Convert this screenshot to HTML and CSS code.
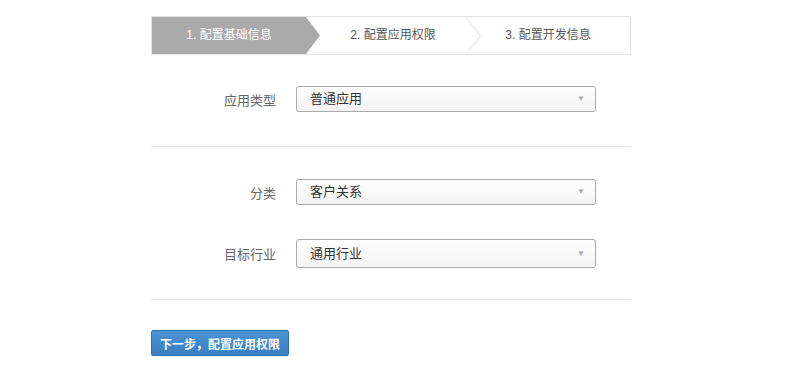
FILE: index.html
```html
<!DOCTYPE html>
<html lang="zh-CN">
<head>
  <meta charset="UTF-8">
  <title>配置基础信息</title>
  <link rel="stylesheet" href="styles.css">
</head>
<body>
  <div class="page">
    <!-- Wizard steps -->
    <div class="steps">
      <div class="step step-active">1. 配置基础信息</div>
      <div class="step step-next">
        2. 配置应用权限
        <svg class="chevron" width="16" height="39" viewBox="0 0 16 39">
          <polyline points="0.5,0 15.5,19 0.5,38" fill="none" stroke="#dedede" stroke-width="1"/>
        </svg>
      </div>
      <div class="step step-last">3. 配置开发信息</div>
    </div>

    <!-- Application type -->
    <div class="group group-first">
      <div class="row">
        <label class="label">应用类型</label>
        <div class="select">普通应用<span class="caret">▼</span></div>
      </div>
    </div>

    <!-- Category and industry -->
    <div class="group group-second">
      <div class="row">
        <label class="label">分类</label>
        <div class="select">客户关系<span class="caret">▼</span></div>
      </div>
      <div class="row row-tall">
        <label class="label">目标行业</label>
        <div class="select">通用行业<span class="caret">▼</span></div>
      </div>
    </div>

    <button class="btn">下一步，配置应用权限</button>
  </div>
</body>
</html>
```

FILE: styles.css
```css
/* General styles */
body {
  margin: 0;
  font-family: "Liberation Sans", "Noto Sans CJK SC", sans-serif;
  background-color: #ffffff;
  color: #333333;
}

/* Main column */
.page {
  width: 480px;
  margin: 16px 0 0 151px;
}

/* Wizard steps */
.steps {
  display: flex;
  height: 37px;
  border: 1px solid #e3e3e3;
  font-size: 12px;
  line-height: 37px;
  color: #555555;
}

.step {
  position: relative;
  text-align: center;
  white-space: nowrap;
}

.step-active {
  width: 168px;
  margin-right: -14px;
  padding-right: 14px;
  box-sizing: border-box;
  background-color: #aaaaaa;
  color: #ffffff;
  clip-path: polygon(0 0, calc(100% - 14px) 0, 100% 50%, calc(100% - 14px) 100%, 0 100%);
}

.step-next {
  width: 160px;
  padding-left: 14px;
  box-sizing: border-box;
}

.chevron {
  position: absolute;
  top: 0;
  right: -15px;
}

.step-last {
  flex: 1;
}

/* Form groups */
.group {
  border-bottom: 1px solid #e5e5e5;
}

.group-first {
  padding: 31px 0 34px;
}

.group-second {
  padding: 32px 0 31px;
}

.row {
  display: flex;
  align-items: center;
}

.row + .row {
  margin-top: 34px;
}

.label {
  width: 125px;
  margin-right: 20px;
  text-align: right;
  font-size: 13px;
  color: #666666;
}

/* Select box */
.select {
  position: relative;
  width: 285px;
  height: 24px;
  padding-left: 13px;
  border: 1px solid #aaaaaa;
  border-radius: 3px;
  background: linear-gradient(#ffffff, #f4f4f4);
  font-size: 13px;
  line-height: 24px;
  color: #333333;
}

.row-tall .select {
  height: 27px;
  line-height: 27px;
}

.caret {
  position: absolute;
  right: 10px;
  top: 0;
  font-size: 8px;
  color: #aaaaaa;
}

/* Button */
.btn {
  margin-top: 30px;
  height: 26px;
  padding: 0 8px;
  border: 1px solid #2f73b0;
  border-radius: 2px;
  background: linear-gradient(#4a93d3, #3a7fc0);
  color: #ffffff;
  font-family: "Liberation Sans", "Noto Sans CJK SC", sans-serif;
  font-size: 12px;
  font-weight: bold;
  cursor: pointer;
}
```
